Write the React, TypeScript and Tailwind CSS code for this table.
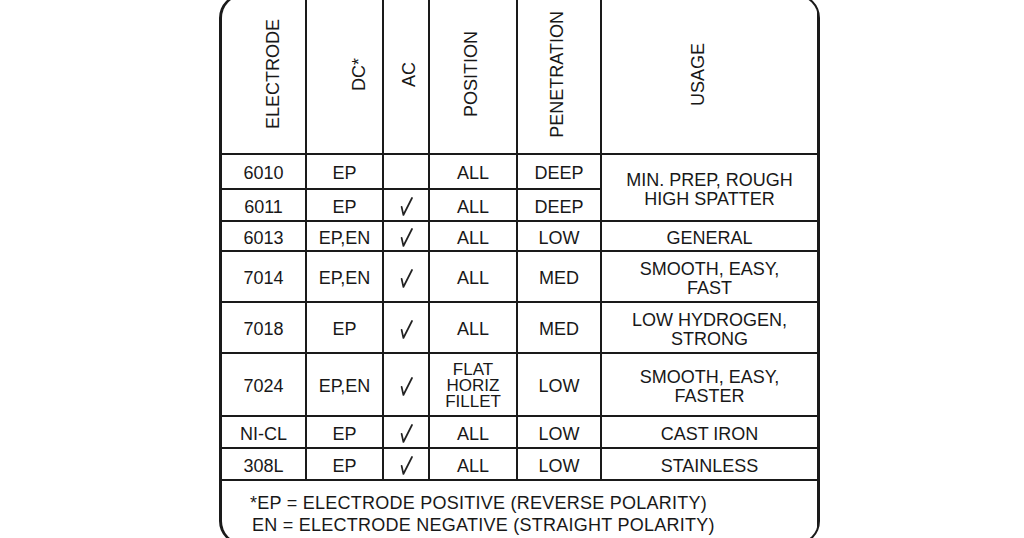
import React from "react";

// ── Electrode chart data ──

type Row = {
  code: string;
  dc: string;
  ac: boolean;
  position: string[];
  penetration: string;
  usage?: string[];
  usageSpan?: boolean;
};

const rows: Row[] = [
  { code: "6010", dc: "EP", ac: false, position: ["ALL"], penetration: "DEEP", usage: ["MIN. PREP, ROUGH", "HIGH SPATTER"], usageSpan: true },
  { code: "6011", dc: "EP", ac: true, position: ["ALL"], penetration: "DEEP" },
  { code: "6013", dc: "EP,EN", ac: true, position: ["ALL"], penetration: "LOW", usage: ["GENERAL"] },
  { code: "7014", dc: "EP,EN", ac: true, position: ["ALL"], penetration: "MED", usage: ["SMOOTH, EASY,", "FAST"] },
  { code: "7018", dc: "EP", ac: true, position: ["ALL"], penetration: "MED", usage: ["LOW HYDROGEN,", "STRONG"] },
  { code: "7024", dc: "EP,EN", ac: true, position: ["FLAT", "HORIZ", "FILLET"], penetration: "LOW", usage: ["SMOOTH, EASY,", "FASTER"] },
  { code: "NI-CL", dc: "EP", ac: true, position: ["ALL"], penetration: "LOW", usage: ["CAST IRON"] },
  { code: "308L", dc: "EP", ac: true, position: ["ALL"], penetration: "LOW", usage: ["STAINLESS"] },
];

const headers = [
  { label: "ELECTRODE", pad: "pl-[19px]" },
  { label: "DC*", pad: "pl-[29px]" },
  { label: "AC", pad: "pl-[6px]" },
  { label: "POSITION", pad: "pr-[4px]" },
  { label: "PENETRATION", pad: "pr-[4px]" },
  { label: "USAGE", pad: "pr-[23px]" },
];

function Check() {
  return (
    <svg width="13" height="19" viewBox="0 0 13 19" fill="none" aria-hidden="true">
      <path d="M1.6 9.8 L3.4 18 L12 1" stroke="#222" strokeWidth="1.7" strokeLinecap="round" strokeLinejoin="round" />
    </svg>
  );
}

function Cell({ children, className = "" }: { children?: React.ReactNode; className?: string }) {
  return (
    <div className={`flex flex-col items-center justify-center bg-white text-center ${className}`}>
      {children}
    </div>
  );
}

export default function App() {
  return (
    <div className="min-h-[538px] bg-white font-['Liberation_Sans',Arial,sans-serif] text-[18px] text-[#181818]">
      <div className="ml-[219px] mt-[-6px] w-[601px] overflow-hidden rounded-[24px] border-2 border-l-[3px] border-[#1a1a1a] bg-[#1a1a1a]">
        <div className="grid grid-cols-[83px_75px_44px_86px_82px_215px] grid-rows-[157px_33px_30px_28px_49px_49px_61px_30px_30px_62px] gap-[2px]">
          {/* Header */}
          {headers.map((h) => (
            <Cell key={h.label} className={h.pad}>
              <span className="[writing-mode:vertical-rl] rotate-180 leading-none">{h.label}</span>
            </Cell>
          ))}

          {/* Body */}
          {rows.map((r) => (
            <React.Fragment key={r.code}>
              <Cell className="pt-[4px]">{r.code}</Cell>
              <Cell className="pt-[4px]">{r.dc}</Cell>
              <Cell className="pt-[3px]">{r.ac && <Check />}</Cell>
              <Cell className={r.position.length > 1 ? "pt-[3px] text-[17px] leading-[16px]" : "pt-[4px]"}>
                {r.position.map((p) => (
                  <span key={p}>{p}</span>
                ))}
              </Cell>
              <Cell className="pt-[4px]">{r.penetration}</Cell>
              {r.usage && (
                <Cell className={`pt-[4px] leading-[19px] ${r.usageSpan ? "row-span-2" : ""}`}>
                  {r.usage.map((u) => (
                    <span key={u}>{u}</span>
                  ))}
                </Cell>
              )}
            </React.Fragment>
          ))}

          {/* Footnote */}
          <div className="col-span-6 bg-white pl-[28px] pt-[11px] leading-[22px] tracking-[0.25px]">
            <p>*EP = ELECTRODE POSITIVE (REVERSE POLARITY)</p>
            <p className="pl-[2px]">EN = ELECTRODE NEGATIVE (STRAIGHT POLARITY)</p>
          </div>
        </div>
      </div>
    </div>
  );
}
